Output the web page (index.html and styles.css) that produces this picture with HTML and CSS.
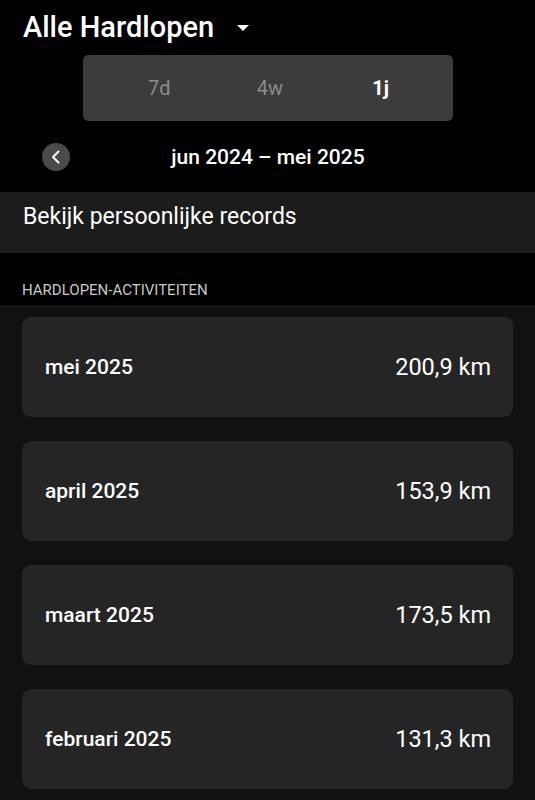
FILE: index.html
```html
<!DOCTYPE html>
<html lang="nl">
<head>
    <meta charset="UTF-8">
    <meta name="viewport" content="width=device-width, initial-scale=1.0">
    <title>Alle Hardlopen</title>
    <link rel="stylesheet" href="styles.css">
</head>
<body>
    <header class="top">
        <h1 class="title">Alle Hardlopen
            <svg class="caret" width="12" height="6" viewBox="0 0 12 6"><path d="M0 0h12L6 6z" fill="#fff"/></svg>
        </h1>

        <div class="segments">
            <span class="segment">7d</span>
            <span class="segment">4w</span>
            <span class="segment active">1j</span>
        </div>

        <div class="period">
            <button class="back" aria-label="Vorige">
                <svg width="28" height="28" viewBox="0 0 28 28"><path d="M16.5 8.5 11 14l5.5 5.5" fill="none" stroke="#fff" stroke-width="2" stroke-linecap="round" stroke-linejoin="round"/></svg>
            </button>
            <span class="range">jun 2024 – mei 2025</span>
        </div>
    </header>

    <div class="records">Bekijk persoonlijke records</div>

    <h2 class="section-label">HARDLOPEN-ACTIVITEITEN</h2>

    <main class="list">
        <div class="card"><span class="month">mei 2025</span><span class="distance">200,9 km</span></div>
        <div class="card"><span class="month">april 2025</span><span class="distance">153,9 km</span></div>
        <div class="card"><span class="month">maart 2025</span><span class="distance">173,5 km</span></div>
        <div class="card"><span class="month">februari 2025</span><span class="distance">131,3 km</span></div>
    </main>
</body>
</html>
```

FILE: styles.css
```css
body {
    margin: 0;
    background: #000;
    color: #fff;
    font-family: Roboto, "Noto Sans", sans-serif;
}

.top {
    padding: 10px 0 0;
}

.title {
    margin: 0;
    padding-left: 23px;
    font-size: 29px;
    font-weight: 500;
    line-height: 34px;
    display: flex;
    align-items: center;
}

.caret {
    margin-left: 23px;
    margin-top: 2px;
}

.segments {
    margin: 11px 0 0 83px;
    width: 370px;
    height: 66px;
    box-sizing: border-box;
    padding: 0 17px 0 21px;
    background: #3c3c3c;
    border-radius: 5px;
    display: grid;
    grid-template-columns: repeat(3, 1fr);
    align-items: center;
}

.segment {
    text-align: center;
    font-size: 20px;
    color: #8c8c8c;
}

.segment.active {
    color: #fff;
    font-weight: 700;
}

.period {
    height: 50px;
    margin-top: 11px;
    position: relative;
    display: flex;
    align-items: center;
    justify-content: center;
}

.back {
    position: absolute;
    left: 42px;
    top: 11px;
    width: 28px;
    height: 28px;
    padding: 0;
    border: none;
    border-radius: 50%;
    background: #4a4a4a;
}

.back svg {
    display: block;
}

.range {
    font-size: 21px;
    font-weight: 500;
    margin-left: 1px;
}

.records {
    margin-top: 10px;
    height: 61px;
    background: #1c1c1c;
    padding: 11px 23px 0;
    box-sizing: border-box;
    font-size: 23px;
}

.section-label {
    margin: 0;
    padding: 28px 22px 0;
    height: 52px;
    box-sizing: border-box;
    font-size: 15px;
    font-weight: 400;
    color: #c8c8c8;
}

.list {
    background: #111;
    padding: 12px 22px;
    display: flex;
    flex-direction: column;
    gap: 24px;
}

.card {
    height: 100px;
    background: #252525;
    border-radius: 9px;
    display: flex;
    align-items: center;
    justify-content: space-between;
    padding: 0 22px 0 23px;
}

.month {
    font-size: 21px;
    font-weight: 500;
}

.distance {
    font-size: 23.5px;
}
```
